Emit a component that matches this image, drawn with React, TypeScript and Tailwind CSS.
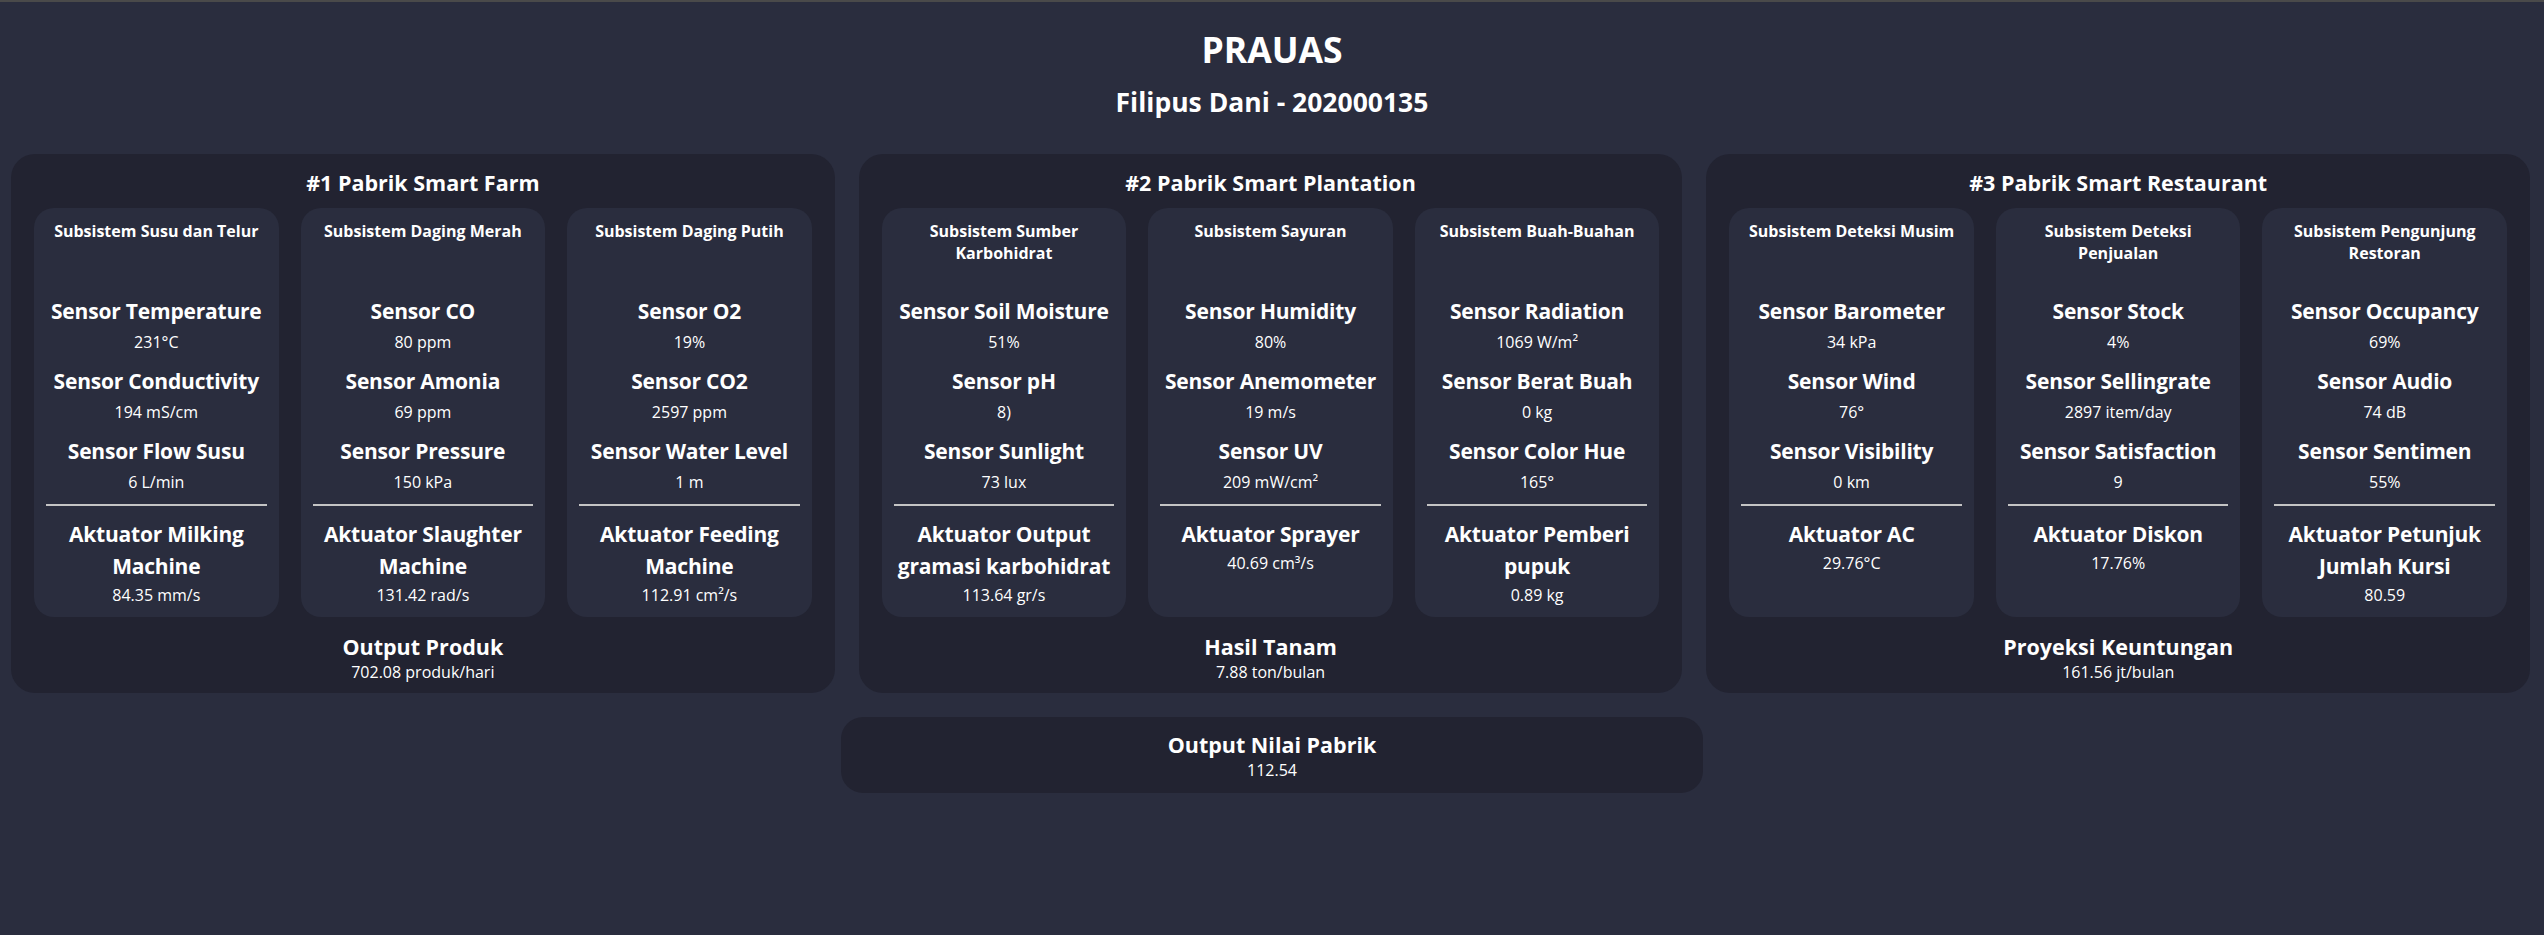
import React from "react";

type Sensor = { name: string; value: string };
type Sub = { title: string; sensors: Sensor[]; act: Sensor };
type Panel = { title: string; subs: Sub[]; outName: string; outValue: string };

const panels: Panel[] = [
  {
    title: "#1 Pabrik Smart Farm",
    outName: "Output Produk",
    outValue: "702.08 produk/hari",
    subs: [
      {
        title: "Subsistem Susu dan Telur",
        sensors: [
          { name: "Sensor Temperature", value: "231°C" },
          { name: "Sensor Conductivity", value: "194 mS/cm" },
          { name: "Sensor Flow Susu", value: "6 L/min" },
        ],
        act: { name: "Aktuator Milking Machine", value: "84.35 mm/s" },
      },
      {
        title: "Subsistem Daging Merah",
        sensors: [
          { name: "Sensor CO", value: "80 ppm" },
          { name: "Sensor Amonia", value: "69 ppm" },
          { name: "Sensor Pressure", value: "150 kPa" },
        ],
        act: { name: "Aktuator Slaughter Machine", value: "131.42 rad/s" },
      },
      {
        title: "Subsistem Daging Putih",
        sensors: [
          { name: "Sensor O2", value: "19%" },
          { name: "Sensor CO2", value: "2597 ppm" },
          { name: "Sensor Water Level", value: "1 m" },
        ],
        act: { name: "Aktuator Feeding Machine", value: "112.91 cm²/s" },
      },
    ],
  },
  {
    title: "#2 Pabrik Smart Plantation",
    outName: "Hasil Tanam",
    outValue: "7.88 ton/bulan",
    subs: [
      {
        title: "Subsistem Sumber Karbohidrat",
        sensors: [
          { name: "Sensor Soil Moisture", value: "51%" },
          { name: "Sensor pH", value: "8)" },
          { name: "Sensor Sunlight", value: "73 lux" },
        ],
        act: { name: "Aktuator Output gramasi karbohidrat", value: "113.64 gr/s" },
      },
      {
        title: "Subsistem Sayuran",
        sensors: [
          { name: "Sensor Humidity", value: "80%" },
          { name: "Sensor Anemometer", value: "19 m/s" },
          { name: "Sensor UV", value: "209 mW/cm²" },
        ],
        act: { name: "Aktuator Sprayer", value: "40.69 cm³/s" },
      },
      {
        title: "Subsistem Buah-Buahan",
        sensors: [
          { name: "Sensor Radiation", value: "1069 W/m²" },
          { name: "Sensor Berat Buah", value: "0 kg" },
          { name: "Sensor Color Hue", value: "165°" },
        ],
        act: { name: "Aktuator Pemberi pupuk", value: "0.89 kg" },
      },
    ],
  },
  {
    title: "#3 Pabrik Smart Restaurant",
    outName: "Proyeksi Keuntungan",
    outValue: "161.56 jt/bulan",
    subs: [
      {
        title: "Subsistem Deteksi Musim",
        sensors: [
          { name: "Sensor Barometer", value: "34 kPa" },
          { name: "Sensor Wind", value: "76°" },
          { name: "Sensor Visibility", value: "0 km" },
        ],
        act: { name: "Aktuator AC", value: "29.76°C" },
      },
      {
        title: "Subsistem Deteksi Penjualan",
        sensors: [
          { name: "Sensor Stock", value: "4%" },
          { name: "Sensor Sellingrate", value: "2897 item/day" },
          { name: "Sensor Satisfaction", value: "9" },
        ],
        act: { name: "Aktuator Diskon", value: "17.76%" },
      },
      {
        title: "Subsistem Pengunjung Restoran",
        sensors: [
          { name: "Sensor Occupancy", value: "69%" },
          { name: "Sensor Audio", value: "74 dB" },
          { name: "Sensor Sentimen", value: "55%" },
        ],
        act: { name: "Aktuator Petunjuk Jumlah Kursi", value: "80.59" },
      },
    ],
  },
];

function SubCard({ sub }: { sub: Sub }) {
  return (
    <div className="min-w-0 flex-1 rounded-[20px] bg-[#2a2d3e] px-[10px] pt-[12px] pb-[11px] text-center">
      <div className="h-[75px] px-[2px] text-[16px] font-bold leading-[22px]">{sub.title}</div>
      <div className="flex flex-col gap-[12px]">
        {sub.sensors.map((s) => (
          <div key={s.name} className="flex flex-col gap-[4px]">
            <div className="text-[21px] font-bold leading-[32px] tracking-[-0.2px]">{s.name}</div>
            <div className="text-[16px] leading-[22px]">{s.value}</div>
          </div>
        ))}
      </div>
      <div className="mx-[2px] mt-[11px] h-[2px] bg-[#c4c4c4]" />
      <div className="mt-[12px] text-[21px] font-bold leading-[32px] tracking-[-0.2px]">{sub.act.name}</div>
      <div className="mt-[2px] text-[16px] leading-[22px]">{sub.act.value}</div>
    </div>
  );
}

function PanelBox({ panel }: { panel: Panel }) {
  return (
    <div className="min-w-0 flex-1 rounded-[24px] bg-[#222331] px-[23px] pt-[13px] pb-[10px] text-center">
      <div className="text-[21.5px] font-bold leading-[32px]">{panel.title}</div>
      <div className="mt-[9px] flex gap-[22px]">
        {panel.subs.map((s) => (
          <SubCard key={s.title} sub={s} />
        ))}
      </div>
      <div className="mt-[16px] text-[21.5px] font-bold leading-[28px]">{panel.outName}</div>
      <div className="text-[16px] leading-[22px]">{panel.outValue}</div>
    </div>
  );
}

export default function App() {
  return (
    <div className="min-h-[935px] border-t-2 border-[#4a4a4a] bg-[#2a2d3e] text-white font-['Open_Sans',sans-serif]">
      <div className="pt-[25px] text-center">
        <div className="text-[35.5px] font-bold leading-[44px]">PRAUAS</div>
        <div className="mt-[14px] text-[26.5px] font-bold leading-[34px]">Filipus Dani - 202000135</div>
      </div>
      <div className="mt-[35px] flex gap-[24px] pl-[11px] pr-[14px]">
        {panels.map((p) => (
          <PanelBox key={p.title} panel={p} />
        ))}
      </div>
      <div className="mx-auto mt-[24px] w-[862px] rounded-[22px] bg-[#222331] pt-[14px] pb-[12px] text-center">
        <div className="text-[21.5px] font-bold leading-[28px]">Output Nilai Pabrik</div>
        <div className="text-[16px] leading-[22px]">112.54</div>
      </div>
    </div>
  );
}
